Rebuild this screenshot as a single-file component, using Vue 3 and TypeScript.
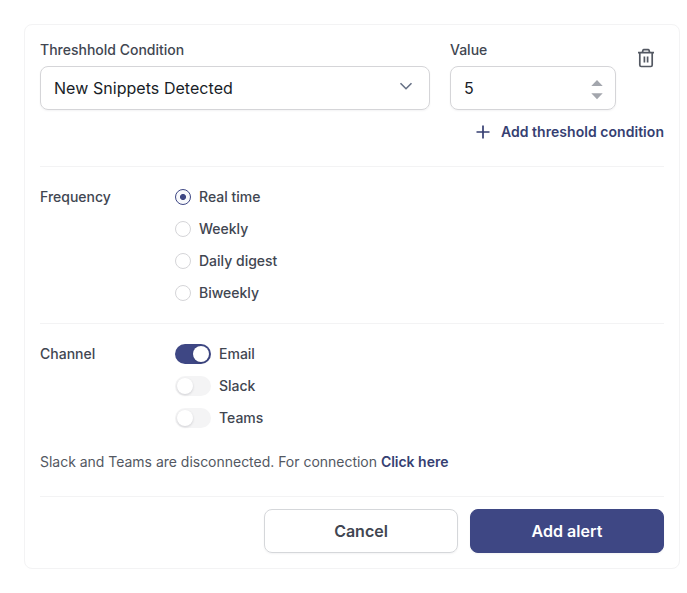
<script setup lang="ts">
import { ref } from 'vue'

const amount = ref<number>(5)
const frequencies: string[] = ['Real time', 'Weekly', 'Daily digest', 'Biweekly']
const selected = ref<string>('Real time')
const channels = ref<{ name: string; on: boolean }[]>([
  { name: 'Email', on: true },
  { name: 'Slack', on: false },
  { name: 'Teams', on: false },
])
</script>

<template>
  <main class="page">
    <section class="card">
      <div class="condition">
        <div class="field field-select">
          <span class="label">Threshhold Condition</span>
          <div class="control">
            <span>New Snippets Detected</span>
            <svg class="chevron" width="14" height="8" viewBox="0 0 14 8">
              <path d="M1.5 1.2 7 6.7l5.5-5.5" />
            </svg>
          </div>
        </div>
        <div class="field field-value">
          <span class="label">Value</span>
          <div class="control">
            <span>{{ amount }}</span>
            <div class="stepper">
              <svg width="12" height="7" viewBox="0 0 12 7" @click="amount++"><path d="M6 .1 11.7 6H.3Z" /></svg>
              <svg width="12" height="7" viewBox="0 0 12 7" @click="amount--"><path d="M6 6.2.3.3h11.4Z" /></svg>
            </div>
          </div>
        </div>
        <button class="trash" type="button" aria-label="Remove">
          <svg width="20" height="20" viewBox="0 0 20 20">
            <path d="M2 4.7h16M6.3 4.5 7 2.3Q7.2 1.7 7.9 1.7h4.2q.7 0 .9.6l.7 2.2M3.8 4.9v12.2q0 1.4 1.4 1.4h9.6q1.4 0 1.4-1.4V4.9M8.4 8.5v6M11.6 8.5v6" />
          </svg>
        </button>
      </div>

      <button class="add" type="button">
        <svg width="14" height="14" viewBox="0 0 14 14"><path d="M7 .5v13M.5 7h13" /></svg>
        <span>Add threshold condition</span>
      </button>

      <div class="group">
        <span class="label">Frequency</span>
        <div class="options">
          <div v-for="item in frequencies" :key="item" class="option" @click="selected = item">
            <i class="radio" :class="{ checked: selected === item }"></i>
            <span>{{ item }}</span>
          </div>
        </div>
      </div>

      <div class="group">
        <span class="label">Channel</span>
        <div class="options">
          <div v-for="item in channels" :key="item.name" class="option" @click="item.on = !item.on">
            <i class="toggle" :class="{ on: item.on }"></i>
            <span>{{ item.name }}</span>
          </div>
        </div>
      </div>

      <p class="note">Slack and Teams are disconnected. For connection <a>Click here</a></p>

      <footer class="actions">
        <button class="btn" type="button">Cancel</button>
        <button class="btn primary" type="button">Add alert</button>
      </footer>
    </section>
  </main>
</template>

<style>
body {
  background: #fff;
}
</style>

<style scoped>
.page {
  padding: 24px 7px 24px 24px;
  font-family: Inter, "Liberation Sans", sans-serif;
  font-size: 14px;
  line-height: 20px;
  color: #414651;
}
.card {
  box-sizing: border-box;
  height: 545px;
  padding: 15px;
  border: 1px solid #f3f3f4;
  border-radius: 8px;
  display: flex;
  flex-direction: column;
}
button {
  font: inherit;
  padding: 0;
  background: none;
  border: 0;
  cursor: pointer;
}
svg {
  display: block;
  fill: none;
}
.label,
.option {
  font-weight: 500;
}
.condition {
  display: flex;
  align-items: flex-start;
}
.field {
  display: flex;
  flex-direction: column;
  gap: 6px;
}
.field-select {
  width: 390px;
  margin-right: 20px;
}
.field-value {
  width: 166px;
}
.control {
  box-sizing: border-box;
  height: 44px;
  padding: 0 13px;
  display: flex;
  align-items: center;
  justify-content: space-between;
  border: 1px solid #d5d5d8;
  border-radius: 8px;
  box-shadow: 0 1px 2px rgba(16, 24, 40, 0.05);
  font-size: 16px;
  line-height: 24px;
  letter-spacing: 0.05px;
  color: #181d27;
}
.chevron {
  margin: 0 3px 4px 0;
  stroke: #667085;
  stroke-width: 1.6;
}
.stepper {
  display: flex;
  flex-direction: column;
  gap: 6px;
  margin: 4px -1px 0 0;
}
.stepper svg {
  fill: #a3a6ad;
}
.trash {
  margin: 8px 0 0 20px;
}
.trash svg {
  stroke: #535862;
  stroke-width: 1.7;
}
.add {
  align-self: flex-end;
  display: flex;
  align-items: center;
  gap: 11px;
  margin-top: 12px;
  color: #363f72;
  font-weight: 600;
  letter-spacing: 0.04px;
}
.add svg {
  stroke: #363f72;
  stroke-width: 1.7;
}
.group {
  display: flex;
  margin-top: 20px;
  padding-top: 20px;
  border-top: 1px solid #f3f3f4;
}
.add + .group {
  margin-top: 24px;
}
.group .label {
  width: 135px;
}
.options {
  display: flex;
  flex-direction: column;
  gap: 12px;
}
.option {
  display: flex;
  align-items: center;
  gap: 8px;
}
.radio {
  box-sizing: border-box;
  width: 16px;
  height: 16px;
  border: 1px solid #d5d5d8;
  border-radius: 50%;
}
.radio.checked {
  border-color: #3e4784;
  background: radial-gradient(circle, #3e4784 2.7px, #f8f9fc 3.3px);
}
.toggle {
  box-sizing: border-box;
  width: 36px;
  height: 20px;
  padding: 2px;
  display: flex;
  border-radius: 10px;
  background: #f4f4f5;
}
.toggle::before {
  content: "";
  width: 16px;
  height: 16px;
  border-radius: 50%;
  background: #fff;
  box-shadow: 0 1px 3px rgba(16, 24, 40, 0.1), 0 1px 2px rgba(16, 24, 40, 0.06);
}
.toggle.on {
  justify-content: flex-end;
  background: #3e4784;
}
.note {
  margin: 24px 0;
  color: #535862;
  letter-spacing: -0.018px;
}
.note a {
  color: #363f72;
  font-weight: 600;
}
.actions {
  display: flex;
  justify-content: flex-end;
  gap: 12px;
  padding-top: 12px;
  border-top: 1px solid #f3f3f4;
}
.btn {
  box-sizing: border-box;
  width: 194px;
  height: 44px;
  border: 1px solid #d5d7da;
  border-radius: 8px;
  box-shadow: 0 1px 2px rgba(16, 24, 40, 0.05);
  font-size: 16px;
  line-height: 24px;
  font-weight: 600;
  color: #414651;
}
.btn.primary {
  border-color: #3e4784;
  background: #3e4784;
  color: #fff;
  letter-spacing: 0.05px;
}
</style>
